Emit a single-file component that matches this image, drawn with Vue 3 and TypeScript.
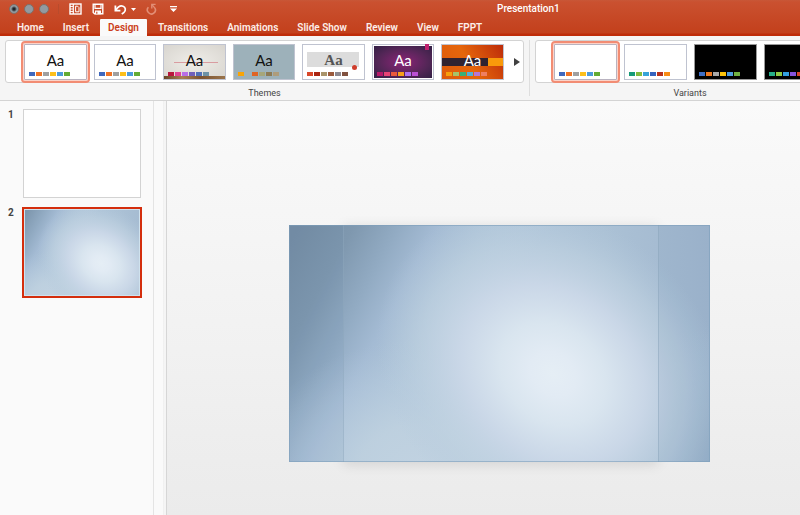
<script setup lang="ts">
interface Theme {
  name: string
  kind: string
  swatches: string[]
}

const tabs: string[] = ['Home', 'Insert', 'Design', 'Transitions', 'Animations', 'Slide Show', 'Review', 'View', 'FPPT']
const activeTab = 'Design'

const office = ['#4068bd', '#f07324', '#a0a0a0', '#fcbf1c', '#4b9bdc', '#62ab35']

const themes: Theme[] = [
  { name: 'Office', kind: 'plain selected', swatches: office },
  { name: 'Office Light', kind: 'plain', swatches: office },
  { name: 'Gallery', kind: 'room', swatches: ['#b8173d', '#e04494', '#b86fe8', '#7060bb', '#5070b8', '#6d92a6'] },
  { name: 'Parcel', kind: 'parcel', swatches: ['#f9a407', '#9fb1ba', '#e06425', '#a6a67a', '#8d7a55', '#ae9c7c'] },
  { name: 'Wood Type', kind: 'wood', swatches: ['#d9482a', '#ab2512', '#a9946a', '#9a5a3c', '#8c8890', '#80513f'] },
  { name: 'Ion', kind: 'ion', swatches: ['#b81769', '#e84276', '#ea5a3c', '#f8a01a', '#ad72f0', '#bb50d4'] },
  { name: 'Berlin', kind: 'berlin', swatches: ['#f7a00c', '#a6c36a', '#38b078', '#4fb0d8', '#b676d4', '#ee7f62'] },
]

const variants: Theme[] = [
  { name: 'Variant 1', kind: 'plain selected', swatches: office },
  { name: 'Variant 2', kind: 'plain', swatches: ['#169a78', '#82bb3c', '#36a3d8', '#3562bd', '#b6301c', '#f98c14'] },
  { name: 'Variant 3', kind: 'black', swatches: ['#3f6fc6', '#ee7a22', '#a8a8a8', '#fdc40b', '#4f9fe0', '#71b243'] },
  { name: 'Variant 4', kind: 'black', swatches: ['#27b08a', '#8fcb45', '#33a0e0', '#8554dc', '#d8452a', '#f59b1f'] },
]
</script>

<template>
  <div class="app">
    <svg class="defs" aria-hidden="true">
      <defs>
        <linearGradient id="sky" x1="0" y1="0" x2="1" y2="0">
          <stop offset="0" stop-color="#b4c9dd" />
          <stop offset=".45" stop-color="#b1c7db" />
          <stop offset=".75" stop-color="#abc1d5" />
          <stop offset="1" stop-color="#a1b7cf" />
        </linearGradient>
        <linearGradient id="shade" gradientUnits="userSpaceOnUse" x1="0" y1="20" x2="194" y2="124">
          <stop offset="0" stop-color="#768ea5" />
          <stop offset=".22" stop-color="#7f98af" />
          <stop offset=".4" stop-color="#92abc3" />
          <stop offset=".55" stop-color="#a3bad3" stop-opacity=".95" />
          <stop offset=".75" stop-color="#afc5d8" stop-opacity=".7" />
          <stop offset="1" stop-color="#b9cdde" stop-opacity="0" />
        </linearGradient>
        <radialGradient id="corner" gradientUnits="userSpaceOnUse" cx="440" cy="230" r="130">
          <stop offset="0" stop-color="#91abc4" />
          <stop offset=".5" stop-color="#99b2cb" stop-opacity=".6" />
          <stop offset="1" stop-color="#a8bfd6" stop-opacity="0" />
        </radialGradient>
        <radialGradient id="floor" gradientUnits="userSpaceOnUse" cx="0" cy="0" r="1" gradientTransform="translate(130 245) scale(170 130)">
          <stop offset="0" stop-color="#c1d2e1" />
          <stop offset=".35" stop-color="#c0d2e0" stop-opacity=".8" />
          <stop offset=".7" stop-color="#b8ccdf" stop-opacity=".4" />
          <stop offset="1" stop-color="#b0c6db" stop-opacity="0" />
        </radialGradient>
        <radialGradient id="glow" gradientUnits="userSpaceOnUse" cx="0" cy="0" r="1" gradientTransform="translate(264 149) rotate(40) scale(190 155)">
          <stop offset="0" stop-color="#e5eef5" />
          <stop offset=".13" stop-color="#e2ebf4" />
          <stop offset=".3" stop-color="#d9e5ef" />
          <stop offset=".52" stop-color="#cbd8e8" stop-opacity=".95" />
          <stop offset=".75" stop-color="#c0d2e1" stop-opacity=".6" />
          <stop offset="1" stop-color="#b4c9dc" stop-opacity="0" />
        </radialGradient>
        <g id="backdrop">
          <rect width="421" height="237" fill="url(#sky)" />
          <rect width="421" height="237" fill="url(#shade)" />
          <rect width="421" height="237" fill="url(#corner)" />
          <rect width="421" height="237" fill="url(#floor)" />
          <rect width="421" height="237" fill="url(#glow)" />
        </g>
      </defs>
    </svg>

    <header class="titlebar">
      <div class="top">
        <div class="lights">
          <button class="light close" aria-label="Close"></button>
          <button class="light" aria-label="Minimise"></button>
          <button class="light" aria-label="Zoom"></button>
        </div>
        <div class="quick">
          <button aria-label="Slide layout">
            <svg width="13" height="12" viewBox="0 0 13 12" fill="none" stroke="currentColor">
              <rect x="1" y="1" width="11" height="10" stroke-width="1.4" />
              <path d="M4.3 1v10" stroke-width="1.2" />
              <path d="M1 3.5h3M1 6h3M1 8.5h3" stroke-width=".9" />
              <path d="M6.6 3.2h2l1.4 1.4v4.2H6.6z" />
            </svg>
          </button>
          <button aria-label="Save">
            <svg width="12" height="12" viewBox="0 0 12 12" fill="none" stroke="currentColor">
              <path d="M1.2 1.2h9.6v9.6H2.6L1.2 9.4z" stroke-width="1.4" />
              <path d="M3 1.5v3.8h6V1.5" stroke-width="1.2" />
              <path d="M3 7.5h6v3.8H3z" fill="currentColor" stroke="none" />
              <path d="M4.8 8.7v2" stroke="#c84c2b" stroke-width="1.2" />
            </svg>
          </button>
          <button aria-label="Undo">
            <svg width="13" height="12" viewBox="0 0 13 12" fill="none" stroke="currentColor">
              <path d="M1.4 2.6v5h5" stroke-width="1.8" />
              <path d="M2 7C3.8 3.9 6.6 2.4 9 3.2c2.7.9 3.1 4.2 1 6.1L7.8 11.2" stroke-width="1.7" />
            </svg>
          </button>
          <button class="caret" aria-label="Undo history">
            <svg width="5" height="3" viewBox="0 0 5 3"><path d="M0 0h5L2.5 3z" fill="currentColor" /></svg>
          </button>
          <button class="redo" aria-label="Redo" disabled>
            <svg width="11" height="12" viewBox="0 0 11 12" fill="none" stroke="currentColor">
              <path d="M2.4 4.2A4 4 0 1 0 8.8 4.8" stroke-width="1.6" />
              <path d="M9.600 1.400H5.800v4" stroke-width="1.4" />
              <path d="M6 1.600L8.800 5" stroke-width="1.2" />
            </svg>
          </button>
          <button class="more" aria-label="Customise toolbar">
            <svg width="7" height="6" viewBox="0 0 7 6" fill="currentColor"><path d="M0 0h7v1.2H0zM0 2.5h7L3.5 6z" /></svg>
          </button>
        </div>
        <h1 class="title">Presentation1</h1>
      </div>
      <nav class="tabs">
        <a v-for="tab in tabs" :key="tab" href="#" :class="{ active: tab === activeTab }">{{ tab }}</a>
      </nav>
    </header>

    <section class="ribbon">
      <div class="group">
        <div class="gallery themes">
          <button v-for="t in themes" :key="t.name" class="thumb" :class="t.kind" :aria-label="t.name">
            <span class="band"></span>
            <span class="aa">Aa</span>
            <span class="swatches">
              <i v-for="(c, i) in t.swatches" :key="i" :style="{ background: c }"></i>
            </span>
          </button>
          <button class="next" aria-label="More themes">
            <svg width="6" height="8" viewBox="0 0 6 8"><path d="M0 0l6 4-6 4z" fill="#404040" /></svg>
          </button>
        </div>
        <div class="caption">Themes</div>
      </div>
      <div class="rule"></div>
      <div class="group">
        <div class="gallery variants">
          <button v-for="v in variants" :key="v.name" class="thumb" :class="v.kind" :aria-label="v.name">
            <span class="swatches">
              <i v-for="(c, i) in v.swatches" :key="i" :style="{ background: c }"></i>
            </span>
          </button>
        </div>
        <div class="caption">Variants</div>
      </div>
    </section>

    <div class="work">
      <aside class="panel">
        <div class="item">
          <span class="num">1</span>
          <button class="slide" aria-label="Slide 1"></button>
        </div>
        <div class="item">
          <span class="num">2</span>
          <button class="slide current" aria-label="Slide 2">
            <svg viewBox="54 0 315 237" preserveAspectRatio="none"><use href="#backdrop" /></svg>
          </button>
        </div>
      </aside>
      <div class="gutter"></div>
      <main class="canvas">
        <div class="stage">
          <svg class="art" viewBox="0 0 421 237">
            <use href="#backdrop" />
            <path d="M0 0h54v237H0zM369 0h52v237h-52z" fill="#527494" fill-opacity=".08" />
            <path d="M54.5 0v237M369.5 0v237" stroke="#8ca5bb" stroke-opacity=".5" />
            <rect x=".5" y=".5" width="420" height="236" fill="none" stroke="#7d9ebb" stroke-opacity=".6" />
          </svg>
        </div>
      </main>
    </div>
  </div>
</template>

<style>
body {
  background: #fafafa;
}
</style>

<style scoped>
.app {
  display: flex;
  flex-direction: column;
  height: 100vh;
  overflow: hidden;
  font-family: Roboto, "Liberation Sans", sans-serif;
  color: #444;
}
button {
  padding: 0;
  border: 0;
  background: none;
  color: inherit;
  font: inherit;
}
.defs {
  position: absolute;
  width: 0;
  height: 0;
}
.titlebar {
  flex: none;
  box-sizing: border-box;
  height: 36px;
  background: linear-gradient(#c85737 0, #ca5130 2px, #c3401c 33px, #bf2c09 34px);
  color: #fff;
}
.top {
  display: flex;
  align-items: center;
  height: 19px;
  padding-bottom: 1px;
  box-sizing: border-box;
}
.lights {
  display: flex;
  gap: 5px;
  padding: 0 9px;
  border-right: 1px solid #b94b2c;
}
.light {
  width: 10px;
  height: 10px;
  box-sizing: border-box;
  border: 1px solid #806f68;
  border-radius: 50%;
  background: #929aa0;
}
.close {
  background: radial-gradient(circle, #202428 0, #202428 1px, #929aa0 3px);
}
.quick {
  display: flex;
  align-items: center;
  padding-left: 10px;
}
.quick button {
  display: flex;
  margin-right: 10px;
}
.quick .caret {
  margin-left: -6px;
}
.quick .redo {
  color: #e28e76;
}
.quick .more {
  margin: 0 0 0 3px;
}
.title {
  margin: 0 0 0 320px;
  font-size: 10px;
  line-height: 18px;
  font-weight: 500;
}
.tabs {
  display: flex;
  gap: 3px;
  padding-left: 9px;
}
.tabs a {
  height: 17px;
  padding: 0 8px;
  border-radius: 1px 1px 0 0;
  color: #fdeee9;
  font-size: 10px;
  line-height: 17px;
  font-weight: 600;
  text-decoration: none;
  white-space: nowrap;
}
.tabs .active {
  background: #fafafa;
  color: #cb3d18;
}
.ribbon {
  flex: none;
  display: flex;
  box-sizing: border-box;
  height: 65px;
  padding: 4px 0 0 5px;
  border-bottom: 1px solid #d4d4d4;
  background: #f5f5f5;
}
.group {
  flex: none;
}
.gallery {
  display: flex;
  align-items: center;
  gap: 7px;
  box-sizing: border-box;
  height: 43px;
  padding-left: 18px;
  border: 1px solid #d3d3d3;
  border-radius: 3px;
  background: #fff;
}
.themes {
  width: 519px;
}
.variants {
  width: 310px;
}
.rule {
  flex: none;
  width: 1px;
  height: 56px;
  margin: 0 5px;
  background: #dedede;
}
.caption {
  padding-top: 3px;
  font-size: 9px;
  line-height: 14px;
  text-align: center;
}
.thumb {
  position: relative;
  flex: none;
  box-sizing: border-box;
  width: 63px;
  height: 36px;
  border: 1px solid #bfc3d0;
  background: #fff;
  color: #111;
}
.themes .thumb:nth-child(even) {
  width: 62px;
}
.selected {
  border-color: #b9b3c0;
  border-radius: 1px;
  outline: 2px solid #f28c73;
  outline-offset: 1px;
  box-shadow: 0 0 0 1px #fbd3c8;
}
.aa {
  position: absolute;
  inset: 6px 0 auto;
  font-family: Lato, sans-serif;
  font-size: 15px;
  line-height: 18px;
  text-align: center;
}
.swatches {
  position: absolute;
  left: 4px;
  bottom: 3px;
  display: flex;
  gap: 1px;
}
.swatches i {
  width: 6px;
  height: 4px;
}
.band {
  position: absolute;
}
.room {
  background: radial-gradient(#efede8, #d8d5cf);
}
.room .band {
  inset: auto 0 0;
  height: 3px;
  background: linear-gradient(90deg, #684427, #a88054 30%, #7b5230 60%, #9b754b);
}
.room .aa {
  background: linear-gradient(#d99ca0, #d99ca0) 60% 11px / 44px 1px no-repeat;
}
.parcel {
  background: #9db1ba;
}
.wood .band {
  inset: 7px 5px auto 4px;
  height: 15px;
  background: #dcdcdc;
}
.wood .aa {
  color: #555;
  font-family: "Liberation Serif", serif;
  font-weight: 700;
}
.wood::after {
  content: "";
  position: absolute;
  right: 7px;
  bottom: 9px;
  width: 5px;
  height: 5px;
  border-radius: 50%;
  background: #cf3e2d;
}
.ion {
  border: 2px solid #fff;
  outline: 1px solid #bfc3d0;
  outline-offset: -1px;
  background: radial-gradient(#8b2477, #542657 60%, #322044);
  color: #fff;
}
.ion::after {
  content: "";
  position: absolute;
  top: -2px;
  right: 3px;
  width: 4px;
  height: 6px;
  background: #c0206e;
}
.ion .swatches {
  left: 3px;
  bottom: 2px;
}
.ion .aa {
  top: 5px;
}
.berlin {
  background: linear-gradient(60deg, #dd5a0c, #e5660c 45%, #bd2c0a);
  color: #fff;
}
.berlin .band {
  inset: 13px 0 auto;
  height: 8px;
  background: linear-gradient(90deg, #302331 46px, #f99a0b 46px);
}
.black {
  border-color: #999;
  background: #000;
}
.next {
  display: flex;
  margin-left: 3px;
}
.work {
  flex: 1;
  display: flex;
  min-height: 0;
}
.panel {
  flex: none;
  display: flex;
  flex-direction: column;
  gap: 9px;
  box-sizing: border-box;
  width: 154px;
  padding: 8px 0 0 8px;
  border-right: 1px solid #e4e4e4;
  background: #fafafa;
}
.item {
  display: flex;
}
.num {
  width: 14px;
  font-size: 10px;
  line-height: 12px;
  font-weight: 700;
}
.slide {
  box-sizing: border-box;
  width: 118px;
  height: 89px;
  margin: 0 1px;
  border: 1px solid #d3d3d3;
  background: #fff;
}
.current {
  display: flex;
  width: 120px;
  height: 91px;
  margin: 0;
  padding: 1px;
  border: 2px solid #d42e0d;
  background: #cfe2ee;
}
.current svg {
  width: 100%;
  height: 100%;
}
.gutter {
  flex: none;
  box-sizing: border-box;
  width: 13px;
  border-right: 1px solid #d6d6d6;
  background: linear-gradient(90deg, #fafafa 9px, #ececec 9px, #f5f5f5 10px);
}
.canvas {
  flex: 1;
  display: flex;
  justify-content: center;
  align-items: flex-start;
  padding: 124px 0 0 32px;
  background: linear-gradient(#fafafa, #ebebeb);
}
.stage {
  position: relative;
  width: 421px;
}
.stage::before {
  content: "";
  position: absolute;
  inset: 0 52px 0 54px;
  box-shadow: 0 2px 12px rgba(0, 0, 0, 0.12);
}
.art {
  position: relative;
  display: block;
  width: 100%;
}
</style>
